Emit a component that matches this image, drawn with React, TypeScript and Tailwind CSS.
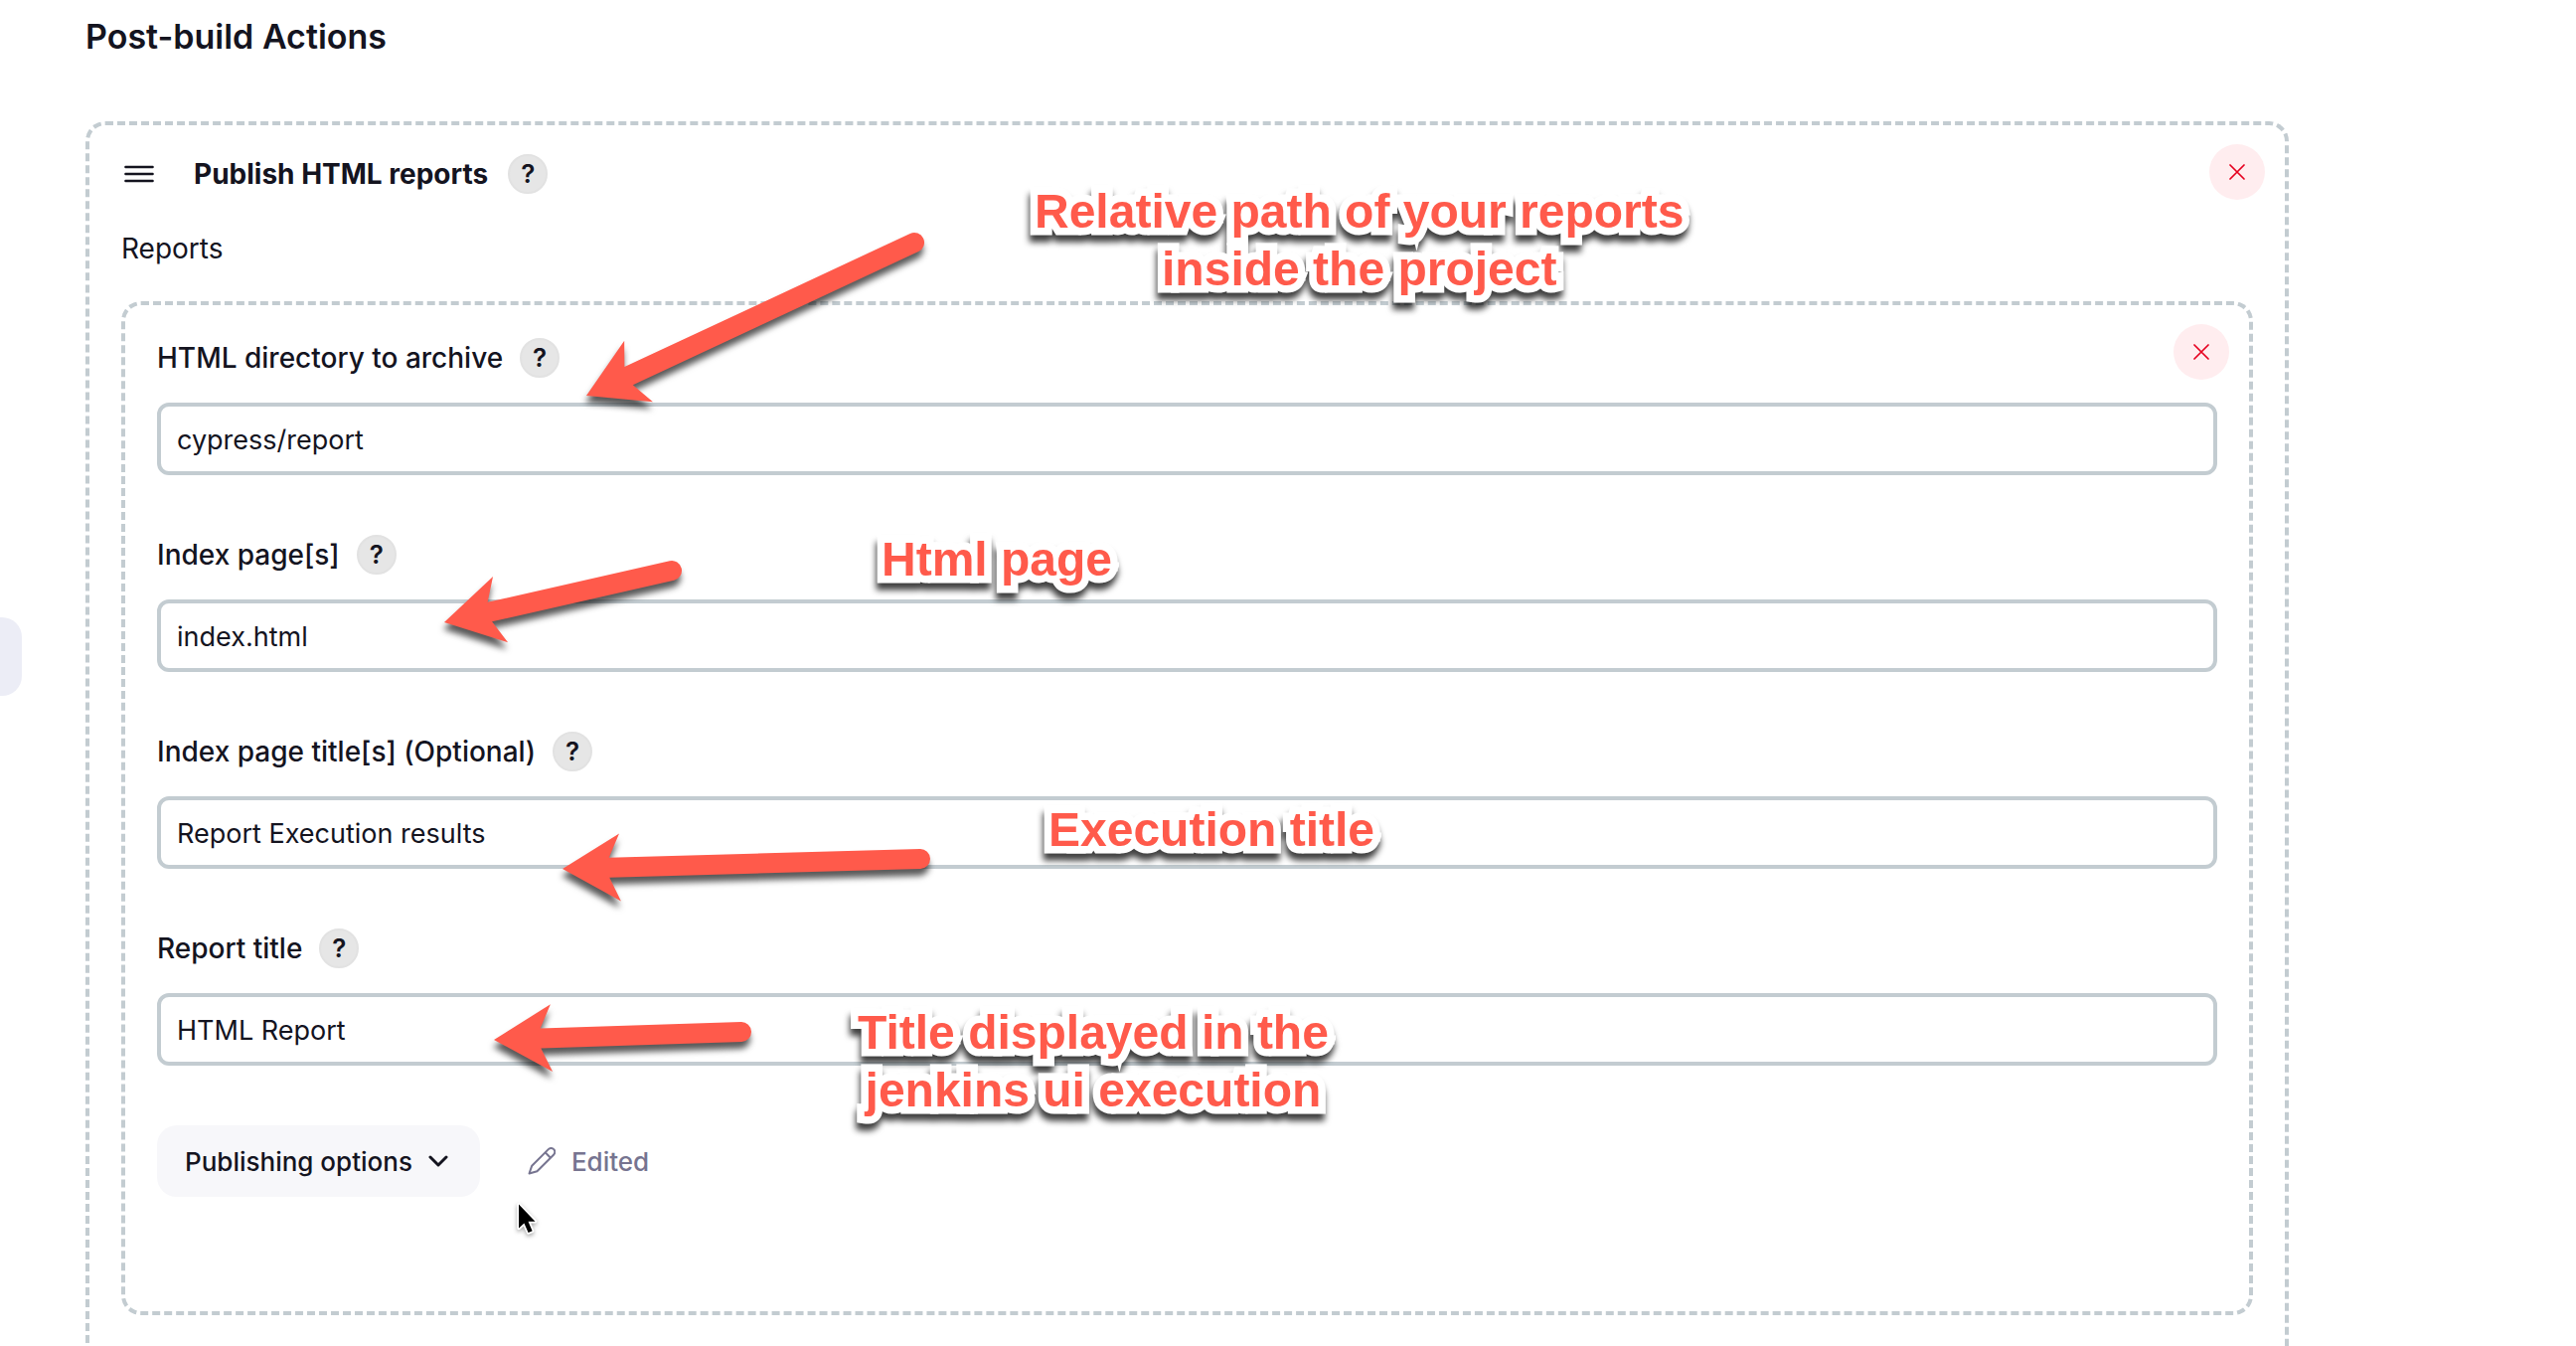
import React, { useId } from "react";

function HelpButton({ topic }: { topic: string }) {
  return (
    <button
      type="button"
      aria-label={`Help for ${topic}`}
      className="flex size-10 shrink-0 items-center justify-center rounded-full border-2 border-[#e2e2e2] bg-[#e6e6e6] text-[26px] leading-none font-semibold text-[#14141f]"
    >
      ?
    </button>
  );
}

function DeleteButton({ label }: { label: string }) {
  return (
    <button
      type="button"
      aria-label={label}
      className="absolute top-[19px] right-5 flex size-14 items-center justify-center rounded-full bg-[#ffedef] text-[#e6001f]"
    >
      <svg viewBox="0 0 16 16" className="size-4" fill="none" stroke="currentColor" strokeWidth="1.7" strokeLinecap="round">
        <path d="M1 1L15 15M15 1L1 15" />
      </svg>
    </button>
  );
}

function Field({ label, value }: { label: string; value: string }) {
  const id = useId();
  return (
    <div className="flex flex-col gap-[25px]">
      <div className="flex h-10 items-center gap-[17px]">
        <label htmlFor={id} className="text-[28px] leading-10 font-medium">
          {label}
        </label>
        <HelpButton topic={label} />
      </div>
      <input
        id={id}
        type="text"
        defaultValue={value}
        className="h-[73px] w-full rounded-xl border-4 border-[#c3ccd1] bg-white px-4 pt-0.5 text-[27px] text-[#14141f] outline-none"
      />
    </div>
  );
}

type Point = [number, number];

/* Arrow outline built along the x axis with its tip at the origin, then turned towards the tail. */
function Arrow({ tip, tail }: { tip: Point; tail: Point }) {
  const dx = tail[0] - tip[0];
  const dy = tail[1] - tip[1];
  const length = Math.hypot(dx, dy);
  const angle = (Math.atan2(dy, dx) * 180) / Math.PI;
  return (
    <path
      transform={`translate(${tip[0]} ${tip[1]}) rotate(${angle})`}
      d={`M0 0L58 -34L47 -10H${length}A10 10 0 0 1 ${length} 10H47L58 34Z`}
    />
  );
}

function Note({ className, children }: { className: string; children: React.ReactNode }) {
  return (
    <p
      className={`pointer-events-none absolute text-center font-['Liberation_Sans',Arial,sans-serif] text-5xl leading-[58px] font-bold whitespace-nowrap text-[#ff5a4b] [paint-order:stroke_fill] [stroke-linejoin:round] [-webkit-text-stroke:15px_white] drop-shadow-[-1px_7px_3px_rgba(0,0,0,0.75)] ${className}`}
    >
      {children}
    </p>
  );
}

export default function App() {
  return (
    <main className="relative flex h-screen overflow-hidden bg-white font-[Inter,sans-serif] text-[#14141f]">
      <div className="mt-[621px] h-[79px] w-[22px] shrink-0 rounded-r-[20px] bg-[#ecedf6]" />

      <div className="ml-16 flex-1 pt-[17px] pr-[289px]">
        <h2 className="text-[34px] leading-10 font-semibold">Post-build Actions</h2>

        <section className="relative mt-[65px] rounded-[20px] border-4 border-dashed border-[#c3ccd1] px-8 pt-[29px] pb-24">
          <DeleteButton label="Delete Publish HTML reports" />
          <div className="flex h-10 items-center">
            <button type="button" aria-label="Reorder" className="ml-[3px] flex h-10 w-[30px] items-center">
              <svg viewBox="0 0 30 18" className="w-[30px]" fill="none" stroke="currentColor" strokeWidth="2.4" strokeLinecap="round">
                <path d="M1.4 2H28.6M1.4 9H28.6M1.4 16H28.6" />
              </svg>
            </button>
            <h3 className="mr-5 ml-10 text-[28px] leading-10 font-bold">Publish HTML reports</h3>
            <HelpButton topic="Publish HTML reports" />
          </div>

          <h4 className="mt-[35px] text-[28px] leading-10 font-normal">Reports</h4>

          <div className="relative mt-[33px] flex flex-col gap-[60px] rounded-[20px] border-4 border-dashed border-[#c3ccd1] px-8 pt-[33px] pb-[115px]">
            <DeleteButton label="Delete report" />
            <Field label="HTML directory to archive" value="cypress/report" />
            <Field label="Index page[s]" value="index.html" />
            <Field label="Index page title[s] (Optional)" value="Report Execution results" />
            <Field label="Report title" value="HTML Report" />

            <div className="flex items-center gap-12">
              <button
                type="button"
                className="flex h-[72px] items-center gap-4 rounded-[20px] bg-[#f7f7fa] pr-8 pl-7 text-[26px] font-medium"
              >
                Publishing options
                <svg viewBox="0 0 20 12" className="w-5" fill="none" stroke="currentColor" strokeWidth="3" strokeLinecap="round" strokeLinejoin="round">
                  <path d="M2 2L10 10L18 2" />
                </svg>
              </button>
              <span className="flex items-center gap-4 text-[26px] font-medium text-[#767490]">
                <svg viewBox="0 0 28 28" className="size-7" fill="none" stroke="currentColor" strokeWidth="2" strokeLinejoin="round">
                  <path d="M1.5 26.5L4.2 18.7L20.8 2.1A3.8 3.8 0 0 1 26.2 7.5L9.4 24.3Z" />
                  <path d="M17.6 5.3L23 10.7" />
                </svg>
                Edited
              </span>
            </div>
          </div>
        </section>
      </div>

      <svg
        viewBox="0 0 2592 1354"
        aria-hidden="true"
        className="pointer-events-none absolute top-0 left-0 h-[1354px] w-[2592px] max-w-none fill-[#ff5a4b] drop-shadow-[-1px_7px_3px_rgba(0,0,0,0.65)]"
      >
        <Arrow tip={[590, 398]} tail={[920, 244]} />
        <Arrow tip={[447, 626]} tail={[676, 574]} />
        <Arrow tip={[566, 874]} tail={[926, 864]} />
        <Arrow tip={[497, 1046]} tail={[746, 1038]} />
      </svg>

      <Note className="top-[184px] left-[1041px]">
        Relative path of your reports
        <br />
        inside the project
      </Note>
      <Note className="top-[534px] left-[887px]">Html page</Note>
      <Note className="top-[806px] left-[1055px]">Execution title</Note>
      <Note className="top-[1010px] left-[863px]">
        Title displayed in the
        <br />
        jenkins ui execution
      </Note>

      <svg
        viewBox="0 0 22 34"
        aria-hidden="true"
        className="pointer-events-none absolute top-[1209px] left-[520px] w-[22px] drop-shadow-[0_2px_2px_rgba(0,0,0,0.35)]"
      >
        <path
          d="M2 2.5V26.5L7.4 21.4L11.6 31L15.6 29.3L11.5 19.8H18.5Z"
          fill="#000"
          stroke="#fff"
          strokeWidth="3.5"
          strokeLinejoin="round"
          paintOrder="stroke"
        />
      </svg>
    </main>
  );
}
